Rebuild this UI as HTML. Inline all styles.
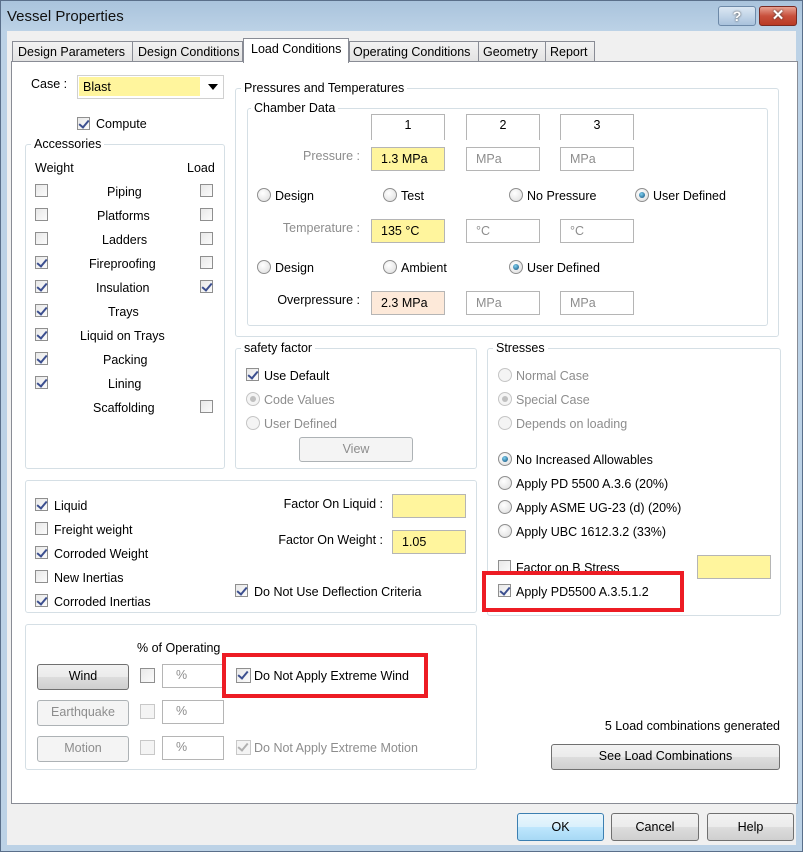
<!DOCTYPE html>
<html><head><meta charset="utf-8"><style>
*{box-sizing:border-box}
body{margin:0;width:803px;height:852px;overflow:hidden;font-family:"Liberation Sans",sans-serif;font-size:12.5px;color:#000;background:#f0f0f0;position:relative}
div,span{position:absolute}
.t{white-space:nowrap;line-height:14px}
.g{color:#8d8d8d}
.gb{border:1px solid #d5dfe5;border-radius:3px}
.gt{background:#fff;padding:0 3px;white-space:nowrap;line-height:14px}
.cb{width:13px;height:13px;border:1px solid #8f8f8f;background:linear-gradient(135deg,#e8e8e8,#fbfbfb)}
.cb.d{border-color:#c8c8c8;background:#f4f4f4}
.ck::after{content:"";position:absolute;left:3px;top:0px;width:4px;height:8px;border:solid #3c4f8f;border-width:0 2px 2px 0;transform:rotate(40deg)}
.ck.d::after{border-color:#b0b0b0}
.rb{width:14px;height:14px;border-radius:50%;border:1px solid #8f8f8f;background:radial-gradient(circle at 40% 35%,#fff,#dcdcdc)}
.rb.on::after{content:"";position:absolute;left:3px;top:3px;width:6px;height:6px;border-radius:50%;background:radial-gradient(circle at 40% 35%,#7fd0f0,#0d4c78)}
.rb.d{border-color:#c5c5c5;background:#f4f4f4}
.rb.d.on::after{background:#c0c0c0}
.in{border:1px solid #b5b5b5;background:#fff;padding:4px 0 0 9px;line-height:14px;white-space:nowrap}
.y{background:#fff59d}
.gray{color:#8d8d8d}
.btn{border:1px solid #707070;border-radius:3px;background:linear-gradient(#f2f2f2,#ebebeb 50%,#dddddd 51%,#cfcfcf);text-align:center;line-height:23px}
.btn.d{border-color:#adb2b5;background:#f4f4f4;color:#8d8d8d}
.red{border:4px solid #ed1c24}
.r{text-align:right}
</style></head><body>
<div style="left:0;top:0;width:803px;height:852px;border:1px solid #5a6f8a;background:#f0f0f0"></div>
<div style="left:1px;top:1px;width:801px;height:30px;background:linear-gradient(#a9c3dc,#bcd2e6)"></div>
<div class="t" style="left:7px;top:8px;font-size:15px;line-height:18px;color:#111">Vessel Properties</div>
<div style="left:718px;top:6px;width:38px;height:20px;border:1px solid #6d89a8;border-radius:3px;background:linear-gradient(#dbe7f3,#a9c2dc);text-align:center;font-weight:bold;color:#fff;font-size:14px;line-height:18px;text-shadow:0 0 2px #333">?</div>
<div style="left:759px;top:6px;width:38px;height:20px;border:1px solid #7a2a22;border-radius:3px;background:linear-gradient(#e8a393,#c8503c 50%,#b93a24);text-align:center;font-weight:bold;color:#fff;font-size:15px;line-height:18px;text-shadow:0 0 2px #333">✕</div>
<div style="left:1px;top:31px;width:801px;height:820px;border-left:6px solid #bcd2e6;border-right:6px solid #bcd2e6;border-bottom:6px solid #bcd2e6;background:#f0f0f0"></div>

<div style="left:12px;top:41px;width:121px;height:21px;border:1px solid #898c95;background:linear-gradient(#f2f2f2,#e3e3e3)"></div><div class="t" style="left:18px;top:45px">Design Parameters</div>
<div style="left:132px;top:41px;width:111px;height:21px;border:1px solid #898c95;background:linear-gradient(#f2f2f2,#e3e3e3)"></div><div class="t" style="left:138px;top:45px">Design Conditions</div>
<div style="left:349px;top:41px;width:130px;height:21px;border:1px solid #898c95;background:linear-gradient(#f2f2f2,#e3e3e3)"></div><div class="t" style="left:353px;top:45px">Operating Conditions</div>
<div style="left:478px;top:41px;width:68px;height:21px;border:1px solid #898c95;background:linear-gradient(#f2f2f2,#e3e3e3)"></div><div class="t" style="left:483px;top:45px">Geometry</div>
<div style="left:545px;top:41px;width:50px;height:21px;border:1px solid #898c95;background:linear-gradient(#f2f2f2,#e3e3e3)"></div><div class="t" style="left:550px;top:45px">Report</div>
<div style="left:11px;top:61px;width:787px;height:743px;border:1px solid #898c95;background:#fff"></div>
<div style="left:243px;top:38px;width:106px;height:25px;border:1px solid #898c95;border-bottom:none;background:#fff"></div>
<div class="t" style="left:251px;top:42px">Load Conditions</div>

<div class="t" style="left:31px;top:77px">Case :</div>
<div style="left:77px;top:75px;width:147px;height:24px;border:1px solid #d0d0d0;background:#fff"></div>
<div style="left:79px;top:77px;width:121px;height:19px" class="y"></div>
<div class="t" style="left:83px;top:80px">Blast</div>
<div style="left:208px;top:84px;width:0;height:0;border-left:5px solid transparent;border-right:5px solid transparent;border-top:6px solid #000"></div>
<div class="cb ck" style="left:77px;top:117px"></div><div class="t" style="left:96px;top:117px">Compute</div>

<div class="gb" style="left:25px;top:144px;width:200px;height:325px"></div>
<div class="gt" style="left:31px;top:137px">Accessories</div>
<div class="t" style="left:35px;top:161px">Weight</div>
<div class="t" style="left:187px;top:161px">Load</div>

<div class="cb" style="left:35px;top:184px"></div><div class="t" style="left:107px;top:185px">Piping</div><div class="cb" style="left:200px;top:184px"></div>
<div class="cb" style="left:35px;top:208px"></div><div class="t" style="left:97px;top:209px">Platforms</div><div class="cb" style="left:200px;top:208px"></div>
<div class="cb" style="left:35px;top:232px"></div><div class="t" style="left:102px;top:233px">Ladders</div><div class="cb" style="left:200px;top:232px"></div>
<div class="cb ck" style="left:35px;top:256px"></div><div class="t" style="left:89px;top:257px">Fireproofing</div><div class="cb" style="left:200px;top:256px"></div>
<div class="cb ck" style="left:35px;top:280px"></div><div class="t" style="left:96px;top:281px">Insulation</div><div class="cb ck" style="left:200px;top:280px"></div>
<div class="cb ck" style="left:35px;top:304px"></div><div class="t" style="left:108px;top:305px">Trays</div>
<div class="cb ck" style="left:35px;top:328px"></div><div class="t" style="left:80px;top:329px">Liquid on Trays</div>
<div class="cb ck" style="left:35px;top:352px"></div><div class="t" style="left:103px;top:353px">Packing</div>
<div class="cb ck" style="left:35px;top:376px"></div><div class="t" style="left:108px;top:377px">Lining</div>
<div class="t" style="left:93px;top:401px">Scaffolding</div><div class="cb" style="left:200px;top:400px"></div>

<div class="gb" style="left:235px;top:88px;width:544px;height:249px"></div>
<div class="gt" style="left:241px;top:81px">Pressures and Temperatures</div>
<div class="gb" style="left:247px;top:108px;width:521px;height:218px"></div>
<div class="gt" style="left:251px;top:101px">Chamber Data</div>
<div style="left:371px;top:114px;width:74px;height:26px;border:1px solid #b5b5b5;border-bottom:none;text-align:center;line-height:20px">1</div>
<div style="left:466px;top:114px;width:74px;height:26px;border:1px solid #b5b5b5;border-bottom:none;text-align:center;line-height:20px">2</div>
<div style="left:560px;top:114px;width:74px;height:26px;border:1px solid #b5b5b5;border-bottom:none;text-align:center;line-height:20px">3</div>

<div class="t g r" style="right:443px;top:149px">Pressure :</div>
<div class="in y" style="left:371px;top:147px;width:74px;height:24px">1.3 MPa</div>
<div class="in gray" style="left:466px;top:147px;width:74px;height:24px">MPa</div>
<div class="in gray" style="left:560px;top:147px;width:74px;height:24px">MPa</div>

<div class="rb" style="left:257px;top:188px"></div><div class="t" style="left:275px;top:189px">Design</div>
<div class="rb" style="left:383px;top:188px"></div><div class="t" style="left:401px;top:189px">Test</div>
<div class="rb" style="left:509px;top:188px"></div><div class="t" style="left:527px;top:189px">No Pressure</div>
<div class="rb on" style="left:635px;top:188px"></div><div class="t" style="left:653px;top:189px">User Defined</div>

<div class="t g r" style="right:443px;top:221px">Temperature :</div>
<div class="in y" style="left:371px;top:219px;width:74px;height:24px">135 °C</div>
<div class="in gray" style="left:466px;top:219px;width:74px;height:24px">°C</div>
<div class="in gray" style="left:560px;top:219px;width:74px;height:24px">°C</div>

<div class="rb" style="left:257px;top:260px"></div><div class="t" style="left:275px;top:261px">Design</div>
<div class="rb" style="left:383px;top:260px"></div><div class="t" style="left:401px;top:261px">Ambient</div>
<div class="rb on" style="left:509px;top:260px"></div><div class="t" style="left:527px;top:261px">User Defined</div>

<div class="t r" style="right:443px;top:293px">Overpressure :</div>
<div class="in" style="left:371px;top:291px;width:74px;height:24px;background:#fde9d9">2.3 MPa</div>
<div class="in gray" style="left:466px;top:291px;width:74px;height:24px">MPa</div>
<div class="in gray" style="left:560px;top:291px;width:74px;height:24px">MPa</div>

<div class="gb" style="left:235px;top:348px;width:242px;height:121px"></div>
<div class="gt" style="left:241px;top:341px">safety factor</div>
<div class="cb ck" style="left:246px;top:368px"></div><div class="t" style="left:264px;top:369px">Use Default</div>
<div class="rb d on" style="left:246px;top:392px"></div><div class="t g" style="left:264px;top:393px">Code Values</div>
<div class="rb d" style="left:246px;top:416px"></div><div class="t g" style="left:264px;top:417px">User Defined</div>
<div class="btn d" style="left:299px;top:437px;width:114px;height:25px">View</div>

<div class="gb" style="left:487px;top:348px;width:294px;height:268px"></div>
<div class="gt" style="left:493px;top:341px">Stresses</div>
<div class="rb d" style="left:498px;top:368px"></div><div class="t g" style="left:516px;top:369px">Normal Case</div>
<div class="rb d on" style="left:498px;top:392px"></div><div class="t g" style="left:516px;top:393px">Special Case</div>
<div class="rb d" style="left:498px;top:416px"></div><div class="t g" style="left:516px;top:417px">Depends on loading</div>
<div class="rb on" style="left:498px;top:452px"></div><div class="t" style="left:516px;top:453px">No Increased Allowables</div>
<div class="rb" style="left:498px;top:476px"></div><div class="t" style="left:516px;top:477px">Apply PD 5500 A.3.6 (20%)</div>
<div class="rb" style="left:498px;top:500px"></div><div class="t" style="left:516px;top:501px">Apply ASME UG-23 (d) (20%)</div>
<div class="rb" style="left:498px;top:524px"></div><div class="t" style="left:516px;top:525px">Apply UBC 1612.3.2 (33%)</div>
<div class="cb" style="left:498px;top:560px"></div><div class="t" style="left:516px;top:561px">Factor on B Stress</div>
<div class="in y" style="left:697px;top:555px;width:74px;height:24px"></div>
<div class="red" style="left:482px;top:571px;width:202px;height:41px;background:#fff"></div>
<div class="cb ck" style="left:498px;top:584px"></div><div class="t" style="left:516px;top:585px">Apply PD5500 A.3.5.1.2</div>

<div class="gb" style="left:25px;top:480px;width:452px;height:133px"></div>
<div class="cb ck" style="left:35px;top:498px"></div><div class="t" style="left:54px;top:499px">Liquid</div>
<div class="cb" style="left:35px;top:522px"></div><div class="t" style="left:54px;top:523px">Freight weight</div>
<div class="cb ck" style="left:35px;top:546px"></div><div class="t" style="left:54px;top:547px">Corroded Weight</div>
<div class="cb" style="left:35px;top:570px"></div><div class="t" style="left:54px;top:571px">New Inertias</div>
<div class="cb ck" style="left:35px;top:594px"></div><div class="t" style="left:54px;top:595px">Corroded Inertias</div>
<div class="t r" style="right:420px;top:497px">Factor On Liquid :</div>
<div class="in y" style="left:392px;top:494px;width:74px;height:24px"></div>
<div class="t r" style="right:420px;top:533px">Factor On Weight :</div>
<div class="in y" style="left:392px;top:530px;width:74px;height:24px">1.05</div>
<div class="cb ck" style="left:235px;top:584px"></div><div class="t" style="left:254px;top:585px">Do Not Use Deflection Criteria</div>

<div class="gb" style="left:25px;top:624px;width:452px;height:146px"></div>
<div class="t" style="left:137px;top:641px">% of Operating</div>
<div class="btn" style="left:37px;top:664px;width:92px;height:26px">Wind</div>
<div class="cb" style="left:140px;top:668px;width:15px;height:15px"></div>
<div class="in gray" style="left:162px;top:664px;width:62px;height:24px;padding-left:13px;padding-top:3px">%</div>
<div class="red" style="left:222px;top:653px;width:206px;height:45px;background:#fff"></div>
<div class="cb ck" style="left:236px;top:668px;width:15px;height:15px"></div><div class="t" style="left:254px;top:669px">Do Not Apply Extreme Wind</div>
<div class="btn d" style="left:37px;top:700px;width:92px;height:26px">Earthquake</div>
<div class="cb d" style="left:140px;top:704px;width:15px;height:15px"></div>
<div class="in gray" style="left:162px;top:700px;width:62px;height:24px;padding-left:13px;padding-top:3px">%</div>
<div class="btn d" style="left:37px;top:736px;width:92px;height:26px">Motion</div>
<div class="cb d" style="left:140px;top:740px;width:15px;height:15px"></div>
<div class="in gray" style="left:162px;top:736px;width:62px;height:24px;padding-left:13px;padding-top:3px">%</div>
<div class="cb d ck" style="left:236px;top:740px;width:15px;height:15px"></div><div class="t g" style="left:254px;top:741px">Do Not Apply Extreme Motion</div>

<div class="t r" style="right:23px;top:719px">5 Load combinations generated</div>
<div class="btn" style="left:551px;top:744px;width:229px;height:26px">See Load Combinations</div>

<div class="btn" style="left:517px;top:813px;width:87px;height:28px;border-color:#3c7fb1;background:linear-gradient(#eaf6fd,#d9f0fc 50%,#bee6fd 51%,#a7d9f5);line-height:26px">OK</div>
<div class="btn" style="left:611px;top:813px;width:88px;height:28px;line-height:26px">Cancel</div>
<div class="btn" style="left:707px;top:813px;width:87px;height:28px;line-height:26px">Help</div>
</body></html>
